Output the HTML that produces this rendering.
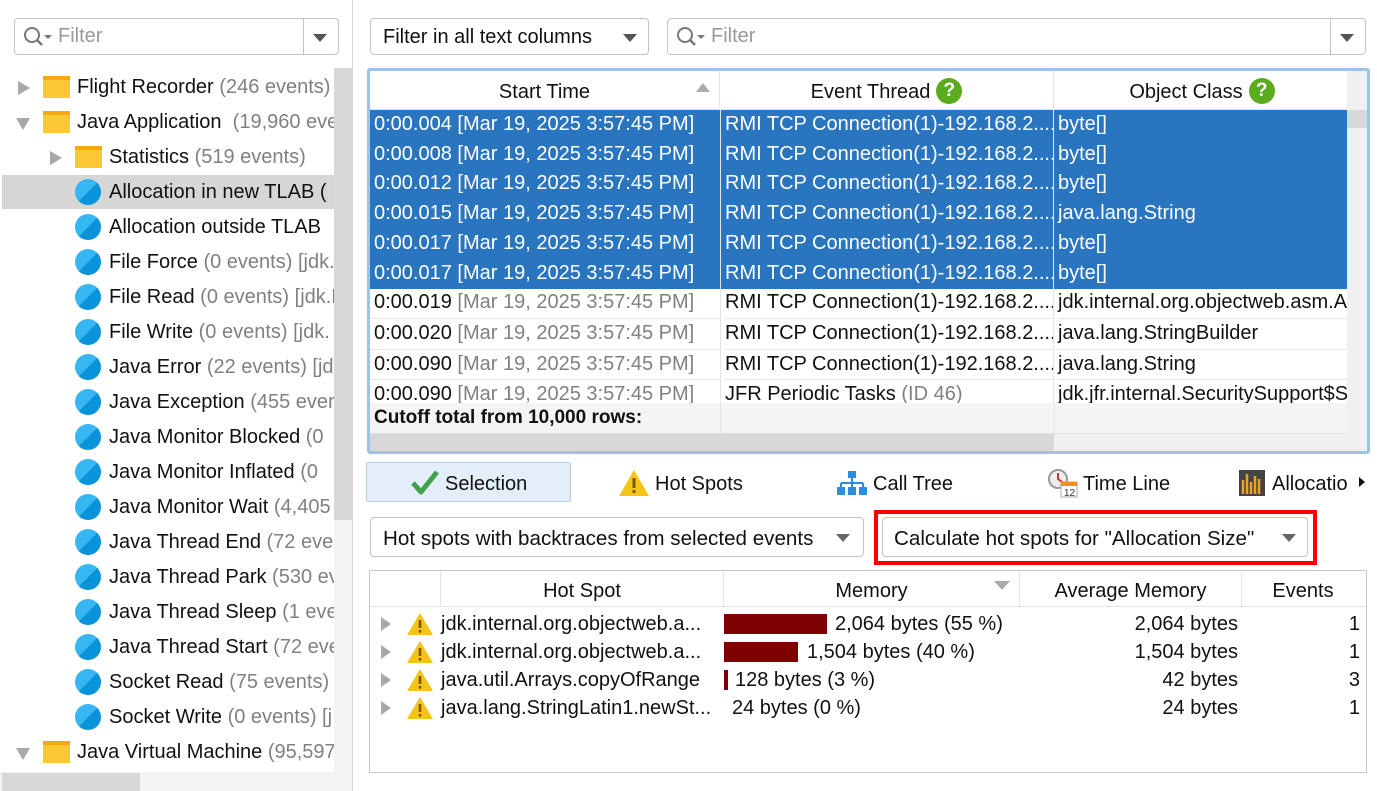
<!DOCTYPE html>
<html><head><meta charset="utf-8"><style>
*{box-sizing:border-box;margin:0;padding:0}
body{width:1377px;height:791px;overflow:hidden;background:#fff;font-family:"Liberation Sans",sans-serif;font-size:20px;color:#111;position:relative}
.a{position:absolute}
.g{color:#808080}
.box{position:absolute;border:1px solid #c4c4c4;border-radius:4px;background:#fff}
.tri{width:0;height:0;border-left:7px solid transparent;border-right:7px solid transparent;border-top:8px solid #555;position:absolute}
.tr{position:absolute;height:35px;line-height:35px;white-space:nowrap}
.dot{position:absolute;width:26px;height:26px;border-radius:50%;background:linear-gradient(135deg,#36b6f2 50%,#0a93d8 50%);top:4px}
.fold{position:absolute;width:27px;height:22px;top:6px;background:#fcc934;border-top:4px solid #f7a80f}
.exp{position:absolute;top:11px;width:0;height:0;border-top:7px solid transparent;border-bottom:7px solid transparent;border-left:12px solid #a8a8a8}
.c{position:absolute;top:0;overflow:hidden;white-space:nowrap;padding-left:4px}
.sel{background:#2a75c0;color:#fff}
.q{display:inline-block;width:26px;height:26px;border-radius:50%;background:#5aab1e;color:#fff;font-weight:bold;text-align:center;line-height:26px;font-size:19px;vertical-align:middle;margin-left:6px;position:relative;top:-2px}
.bar{position:absolute;background:#7f0000;height:20px;top:4px}
.w{position:absolute;top:2px;left:36px}
</style></head><body>
<!-- left panel -->
<div class="box" style="left:14px;top:18px;width:325px;height:37px;border-radius:4px"></div>
<svg class="a" style="left:22px;top:26px" width="34" height="22"><circle cx="10" cy="9" r="7" fill="none" stroke="#777" stroke-width="2"/><line x1="15" y1="14" x2="20" y2="19" stroke="#777" stroke-width="2.5"/><path d="M22 9h8l-4 4z" fill="#777"/></svg>
<div class="a" style="left:58px;top:25px;color:#999">Filter</div>
<div class="a" style="left:303px;top:19px;width:1px;height:35px;background:#c4c4c4"></div>
<div class="tri" style="left:313px;top:34px"></div>
<div class="a" style="left:352px;top:0;width:1px;height:791px;background:#d6d6d6"></div>
<div class="a" style="left:334px;top:68px;width:18px;height:704px;background:#f3f3f3"></div>
<div class="a" style="left:334px;top:68px;width:18px;height:452px;background:#d8d8d8"></div>
<div class="a" style="left:0;top:772px;width:352px;height:19px;background:#f3f3f3"></div>
<div class="a" style="left:2px;top:773px;width:138px;height:18px;background:#d8d8d8"></div>
<div class="a" style="left:2px;top:175px;width:332px;height:34px;background:#d6d6d6"></div>
<div class="a" style="left:0;top:70px;width:334px;height:702px;overflow:hidden">
<div class="tr" style="top:0"><div class="exp" style="left:18px"></div><div class="fold" style="left:43px"></div><span class="a" style="left:77px">Flight Recorder <span class="g">(246 events)</span></span></div>
<div class="tr" style="top:35px"><div class="exp" style="left:16px;top:13px;border-left:7px solid transparent;border-right:7px solid transparent;border-top:12px solid #a8a8a8;border-bottom:0"></div><div class="fold" style="left:43px"></div><span class="a" style="left:77px">Java Application <span class="g">&nbsp;(19,960 events)</span></span></div>
<div class="tr" style="top:70px"><div class="exp" style="left:50px"></div><div class="fold" style="left:75px"></div><span class="a" style="left:109px">Statistics <span class="g">(519 events)</span></span></div>
<div class="tr" style="top:105px"><div class="dot" style="left:75px"></div><span class="a" style="left:109px">Allocation in new TLAB (</span></div>
<div class="tr" style="top:140px"><div class="dot" style="left:75px"></div><span class="a" style="left:109px">Allocation outside TLAB</span></div>
<div class="tr" style="top:175px"><div class="dot" style="left:75px"></div><span class="a" style="left:109px">File Force <span class="g">(0 events) [jdk.</span></span></div>
<div class="tr" style="top:210px"><div class="dot" style="left:75px"></div><span class="a" style="left:109px">File Read <span class="g">(0 events) [jdk.F</span></span></div>
<div class="tr" style="top:245px"><div class="dot" style="left:75px"></div><span class="a" style="left:109px">File Write <span class="g">(0 events) [jdk.</span></span></div>
<div class="tr" style="top:280px"><div class="dot" style="left:75px"></div><span class="a" style="left:109px">Java Error <span class="g">(22 events) [jd</span></span></div>
<div class="tr" style="top:315px"><div class="dot" style="left:75px"></div><span class="a" style="left:109px">Java Exception <span class="g">(455 ever</span></span></div>
<div class="tr" style="top:350px"><div class="dot" style="left:75px"></div><span class="a" style="left:109px">Java Monitor Blocked <span class="g">(0</span></span></div>
<div class="tr" style="top:385px"><div class="dot" style="left:75px"></div><span class="a" style="left:109px">Java Monitor Inflated <span class="g">(0</span></span></div>
<div class="tr" style="top:420px"><div class="dot" style="left:75px"></div><span class="a" style="left:109px">Java Monitor Wait <span class="g">(4,405</span></span></div>
<div class="tr" style="top:455px"><div class="dot" style="left:75px"></div><span class="a" style="left:109px">Java Thread End <span class="g">(72 ever</span></span></div>
<div class="tr" style="top:490px"><div class="dot" style="left:75px"></div><span class="a" style="left:109px">Java Thread Park <span class="g">(530 ev</span></span></div>
<div class="tr" style="top:525px"><div class="dot" style="left:75px"></div><span class="a" style="left:109px">Java Thread Sleep <span class="g">(1 eve</span></span></div>
<div class="tr" style="top:560px"><div class="dot" style="left:75px"></div><span class="a" style="left:109px">Java Thread Start <span class="g">(72 eve</span></span></div>
<div class="tr" style="top:595px"><div class="dot" style="left:75px"></div><span class="a" style="left:109px">Socket Read <span class="g">(75 events)</span></span></div>
<div class="tr" style="top:630px"><div class="dot" style="left:75px"></div><span class="a" style="left:109px">Socket Write <span class="g">(0 events) [j</span></span></div>
<div class="tr" style="top:665px"><div class="exp" style="left:16px;top:13px;border-left:7px solid transparent;border-right:7px solid transparent;border-top:12px solid #a8a8a8;border-bottom:0"></div><div class="fold" style="left:43px"></div><span class="a" style="left:77px">Java Virtual Machine <span class="g">(95,597</span></span></div>
</div>

<!-- right top -->
<div class="box" style="left:370px;top:18px;width:279px;height:37px"></div>
<div class="a" style="left:383px;top:26px">Filter in all text columns</div>
<div class="tri" style="left:623px;top:34px"></div>
<div class="box" style="left:667px;top:18px;width:699px;height:37px"></div>
<svg class="a" style="left:675px;top:26px" width="34" height="22"><circle cx="10" cy="9" r="7" fill="none" stroke="#777" stroke-width="2"/><line x1="15" y1="14" x2="20" y2="19" stroke="#777" stroke-width="2.5"/><path d="M22 9h8l-4 4z" fill="#777"/></svg>
<div class="a" style="left:711px;top:25px;color:#999">Filter</div>
<div class="a" style="left:1330px;top:19px;width:1px;height:35px;background:#c4c4c4"></div>
<div class="tri" style="left:1340px;top:34px"></div>

<div class="a" style="left:367px;top:68px;width:1003px;height:386px;border:3px solid #9cc3ea;border-radius:3px;overflow:hidden;background:#fff">
 <div class="a" style="left:0;top:0;width:980px;height:39px;border-bottom:1px solid #e4e4e4">
  <div class="a" style="left:0;width:350px;height:39px;line-height:42px;text-align:center;border-right:1px solid #e4e4e4">Start Time</div>
  <div class="a" style="left:326px;top:12px;border-left:7px solid transparent;border-right:7px solid transparent;border-bottom:9px solid #aaa"></div>
  <div class="a" style="left:350px;width:334px;height:39px;line-height:42px;text-align:center;border-right:1px solid #e4e4e4">Event Thread<span class="q">?</span></div>
  <div class="a" style="left:684px;width:296px;height:39px;line-height:42px;text-align:center">Object Class<span class="q">?</span></div>
 </div>
 <div class="a" style="left:977px;top:0;width:20px;height:363px;background:#f0f0f0"></div>
 <div class="a" style="left:977px;top:39px;width:20px;height:18px;background:#d8d8d8"></div>
 <div class="a" style="left:0;top:39px;width:977px;height:293px;overflow:hidden">
  <div class="a sel" style="top:0;left:0;width:977px;height:179px"></div>
  <div class="c" style="left:0;width:350px;line-height:29.7px">
   <div style="color:#fff">0:00.004 [Mar 19, 2025 3:57:45 PM]</div><div style="color:#fff">0:00.008 [Mar 19, 2025 3:57:45 PM]</div><div style="color:#fff">0:00.012 [Mar 19, 2025 3:57:45 PM]</div><div style="color:#fff">0:00.015 [Mar 19, 2025 3:57:45 PM]</div><div style="color:#fff">0:00.017 [Mar 19, 2025 3:57:45 PM]</div><div style="color:#fff">0:00.017 [Mar 19, 2025 3:57:45 PM]</div>
   <div style="border-bottom:1px solid #e4e4e4;margin-left:-4px;padding-left:4px">0:00.019 <span class="g">[Mar 19, 2025 3:57:45 PM]</span></div><div style="border-bottom:1px solid #e4e4e4;margin-left:-4px;padding-left:4px">0:00.020 <span class="g">[Mar 19, 2025 3:57:45 PM]</span></div><div style="border-bottom:1px solid #e4e4e4;margin-left:-4px;padding-left:4px">0:00.090 <span class="g">[Mar 19, 2025 3:57:45 PM]</span></div><div>0:00.090 <span class="g">[Mar 19, 2025 3:57:45 PM]</span></div>
  </div>
  <div class="c" style="left:350px;width:334px;line-height:29.7px;border-left:1px solid #e4e4e4;border-right:1px solid #e4e4e4">
   <div style="color:#fff">RMI TCP Connection(1)-192.168.2....</div><div style="color:#fff">RMI TCP Connection(1)-192.168.2....</div><div style="color:#fff">RMI TCP Connection(1)-192.168.2....</div><div style="color:#fff">RMI TCP Connection(1)-192.168.2....</div><div style="color:#fff">RMI TCP Connection(1)-192.168.2....</div><div style="color:#fff">RMI TCP Connection(1)-192.168.2....</div>
   <div style="border-bottom:1px solid #e4e4e4">RMI TCP Connection(1)-192.168.2....</div><div style="border-bottom:1px solid #e4e4e4">RMI TCP Connection(1)-192.168.2....</div><div style="border-bottom:1px solid #e4e4e4">RMI TCP Connection(1)-192.168.2....</div><div>JFR Periodic Tasks <span class="g">(ID 46)</span></div>
  </div>
  <div class="c" style="left:684px;width:293px;line-height:29.7px">
   <div style="color:#fff">byte[]</div><div style="color:#fff">byte[]</div><div style="color:#fff">byte[]</div><div style="color:#fff">java.lang.String</div><div style="color:#fff">byte[]</div><div style="color:#fff">byte[]</div>
   <div style="border-bottom:1px solid #e4e4e4">jdk.internal.org.objectweb.asm.A</div><div style="border-bottom:1px solid #e4e4e4">java.lang.StringBuilder</div><div style="border-bottom:1px solid #e4e4e4">java.lang.String</div><div>jdk.jfr.internal.SecuritySupport$S</div>
  </div>
 </div>
 <div class="a" style="left:0;top:332px;width:977px;height:31px;background:#f4f4f4;border-bottom:1px solid #e0e0e0">
  <div class="a" style="left:4px;top:0;line-height:30px;font-weight:bold;font-size:19px">Cutoff total from 10,000 rows:</div>
  <div class="a" style="left:350px;top:0;width:1px;height:30px;background:#e4e4e4"></div>
  <div class="a" style="left:684px;top:0;width:1px;height:30px;background:#e4e4e4"></div>
 </div>
 <div class="a" style="left:0;top:363px;width:997px;height:20px;background:#f0f0f0"></div>
 <div class="a" style="left:0;top:363px;width:684px;height:17px;background:#d8d8d8"></div>
</div>

<!-- tabs -->
<div class="a" style="left:366px;top:462px;width:205px;height:40px;background:#e3eef9;border:1px solid #b5cfe9;border-radius:2px"></div>
<svg class="a" style="left:411px;top:470px" width="28" height="26"><path d="M2 13l8 9L26 2" fill="none" stroke="#3fa34d" stroke-width="5" stroke-linejoin="round"/></svg>
<div class="a" style="left:445px;top:473px">Selection</div>
<svg class="a" style="left:618px;top:469px" width="32" height="28"><path d="M16 1L31 27H1z" fill="#f5c416"/><rect x="14.5" y="9" width="3" height="10" fill="#7a5a00"/><rect x="14.5" y="21" width="3" height="3" fill="#7a5a00"/></svg>
<div class="a" style="left:655px;top:473px">Hot Spots</div>
<svg class="a" style="left:837px;top:470px" width="30" height="26"><rect x="11" y="1" width="8" height="7" fill="#2b8de0"/><path d="M15 8v5M4 13h22M4 13v4M15 13v4M26 13v4" stroke="#2b8de0" stroke-width="2" fill="none"/><rect x="0" y="17" width="8" height="8" fill="#2b8de0"/><rect x="11" y="17" width="8" height="8" fill="#2b8de0"/><rect x="22" y="17" width="8" height="8" fill="#2b8de0"/></svg>
<div class="a" style="left:873px;top:473px">Call Tree</div>
<svg class="a" style="left:1047px;top:468px" width="32" height="30"><circle cx="11" cy="11" r="9" fill="#eee" stroke="#999" stroke-width="2"/><path d="M11 5v6l4 3" stroke="#c33" stroke-width="2" fill="none"/><rect x="14" y="14" width="16" height="15" fill="#fff" stroke="#aaa"/><rect x="14" y="14" width="16" height="4" fill="#f09020"/><text x="17" y="28" font-size="10" font-family="Liberation Sans" fill="#333">12</text></svg>
<div class="a" style="left:1083px;top:473px">Time Line</div>
<svg class="a" style="left:1239px;top:470px" width="26" height="26"><rect width="26" height="26" fill="#444"/><path d="M4 24V10M8 24V4M12 24V12M16 24V6M20 24V9" stroke="#f0a020" stroke-width="2.5"/></svg>
<div class="a" style="left:1272px;top:473px">Allocatio</div>
<div class="a" style="left:1359px;top:477px;border-top:5px solid transparent;border-bottom:5px solid transparent;border-left:6px solid #111"></div>

<!-- dropdowns -->
<div class="box" style="left:370px;top:517px;width:494px;height:40px"></div>
<div class="a" style="left:383px;top:527px;font-size:20.6px">Hot spots with backtraces from selected events</div>
<div class="tri" style="left:836px;top:534px;border-top-color:#666"></div>
<div class="a" style="left:874px;top:510px;width:443px;height:55px;border:4px solid #f00"></div>
<div class="box" style="left:882px;top:517px;width:426px;height:40px"></div>
<div class="a" style="left:894px;top:527px;font-size:20.6px">Calculate hot spots for "Allocation Size"</div>
<div class="tri" style="left:1282px;top:534px;border-top-color:#666"></div>

<!-- bottom table -->
<div class="a" style="left:369px;top:570px;width:998px;height:203px;border:1px solid #c8c8c8;background:#fff">
 <div class="a" style="left:0;top:0;width:996px;height:36px;border-bottom:1px solid #e4e4e4">
  <div class="a" style="left:0;width:71px;height:36px;border-right:1px solid #e4e4e4"></div>
  <div class="a" style="left:71px;width:283px;height:36px;line-height:40px;text-align:center;border-right:1px solid #e4e4e4">Hot Spot</div>
  <div class="a" style="left:354px;width:296px;height:36px;line-height:40px;text-align:center;border-right:1px solid #e4e4e4">Memory</div>
  <div class="a" style="left:624px;top:10px;border-left:8px solid transparent;border-right:8px solid transparent;border-top:9px solid #aaa"></div>
  <div class="a" style="left:650px;width:222px;height:36px;line-height:40px;text-align:center;border-right:1px solid #e4e4e4">Average Memory</div>
  <div class="a" style="left:872px;width:122px;height:36px;line-height:40px;text-align:center">Events</div>
 </div>
</div>
<div class="a" style="left:370px;top:610px;width:996px;height:112px;line-height:28px">
 <div class="a" style="top:0;left:0;width:996px;height:28px">
  <div class="exp" style="left:11px;top:7px;border-left-width:10px;border-top-width:7px;border-bottom-width:7px"></div><svg class="w" width="28" height="24"><path d="M14 1L27 23H1z" fill="#f5c416"/><rect x="12.7" y="8" width="2.6" height="8" fill="#7a5a00"/><rect x="12.7" y="18" width="2.6" height="2.6" fill="#7a5a00"/></svg>
  <div class="a" style="left:71px">jdk.internal.org.objectweb.a...</div>
  <div class="bar" style="left:354px;width:103px"></div><div class="a" style="left:465px">2,064 bytes (55 %)</div>
  <div class="a" style="right:128px">2,064 bytes</div><div class="a" style="right:6px">1</div>
 </div>
 <div class="a" style="top:28px;left:0;width:996px;height:28px">
  <div class="exp" style="left:11px;top:7px;border-left-width:10px;border-top-width:7px;border-bottom-width:7px"></div><svg class="w" width="28" height="24"><path d="M14 1L27 23H1z" fill="#f5c416"/><rect x="12.7" y="8" width="2.6" height="8" fill="#7a5a00"/><rect x="12.7" y="18" width="2.6" height="2.6" fill="#7a5a00"/></svg>
  <div class="a" style="left:71px">jdk.internal.org.objectweb.a...</div>
  <div class="bar" style="left:354px;width:74px"></div><div class="a" style="left:437px">1,504 bytes (40 %)</div>
  <div class="a" style="right:128px">1,504 bytes</div><div class="a" style="right:6px">1</div>
 </div>
 <div class="a" style="top:56px;left:0;width:996px;height:28px">
  <div class="exp" style="left:11px;top:7px;border-left-width:10px;border-top-width:7px;border-bottom-width:7px"></div><svg class="w" width="28" height="24"><path d="M14 1L27 23H1z" fill="#f5c416"/><rect x="12.7" y="8" width="2.6" height="8" fill="#7a5a00"/><rect x="12.7" y="18" width="2.6" height="2.6" fill="#7a5a00"/></svg>
  <div class="a" style="left:71px">java.util.Arrays.copyOfRange</div>
  <div class="bar" style="left:354px;width:4px"></div><div class="a" style="left:365px">128 bytes (3 %)</div>
  <div class="a" style="right:128px">42 bytes</div><div class="a" style="right:6px">3</div>
 </div>
 <div class="a" style="top:84px;left:0;width:996px;height:28px">
  <div class="exp" style="left:11px;top:7px;border-left-width:10px;border-top-width:7px;border-bottom-width:7px"></div><svg class="w" width="28" height="24"><path d="M14 1L27 23H1z" fill="#f5c416"/><rect x="12.7" y="8" width="2.6" height="8" fill="#7a5a00"/><rect x="12.7" y="18" width="2.6" height="2.6" fill="#7a5a00"/></svg>
  <div class="a" style="left:71px">java.lang.StringLatin1.newSt...</div>
  <div class="a" style="left:362px">24 bytes (0 %)</div>
  <div class="a" style="right:128px">24 bytes</div><div class="a" style="right:6px">1</div>
 </div>
</div>
</body></html>
